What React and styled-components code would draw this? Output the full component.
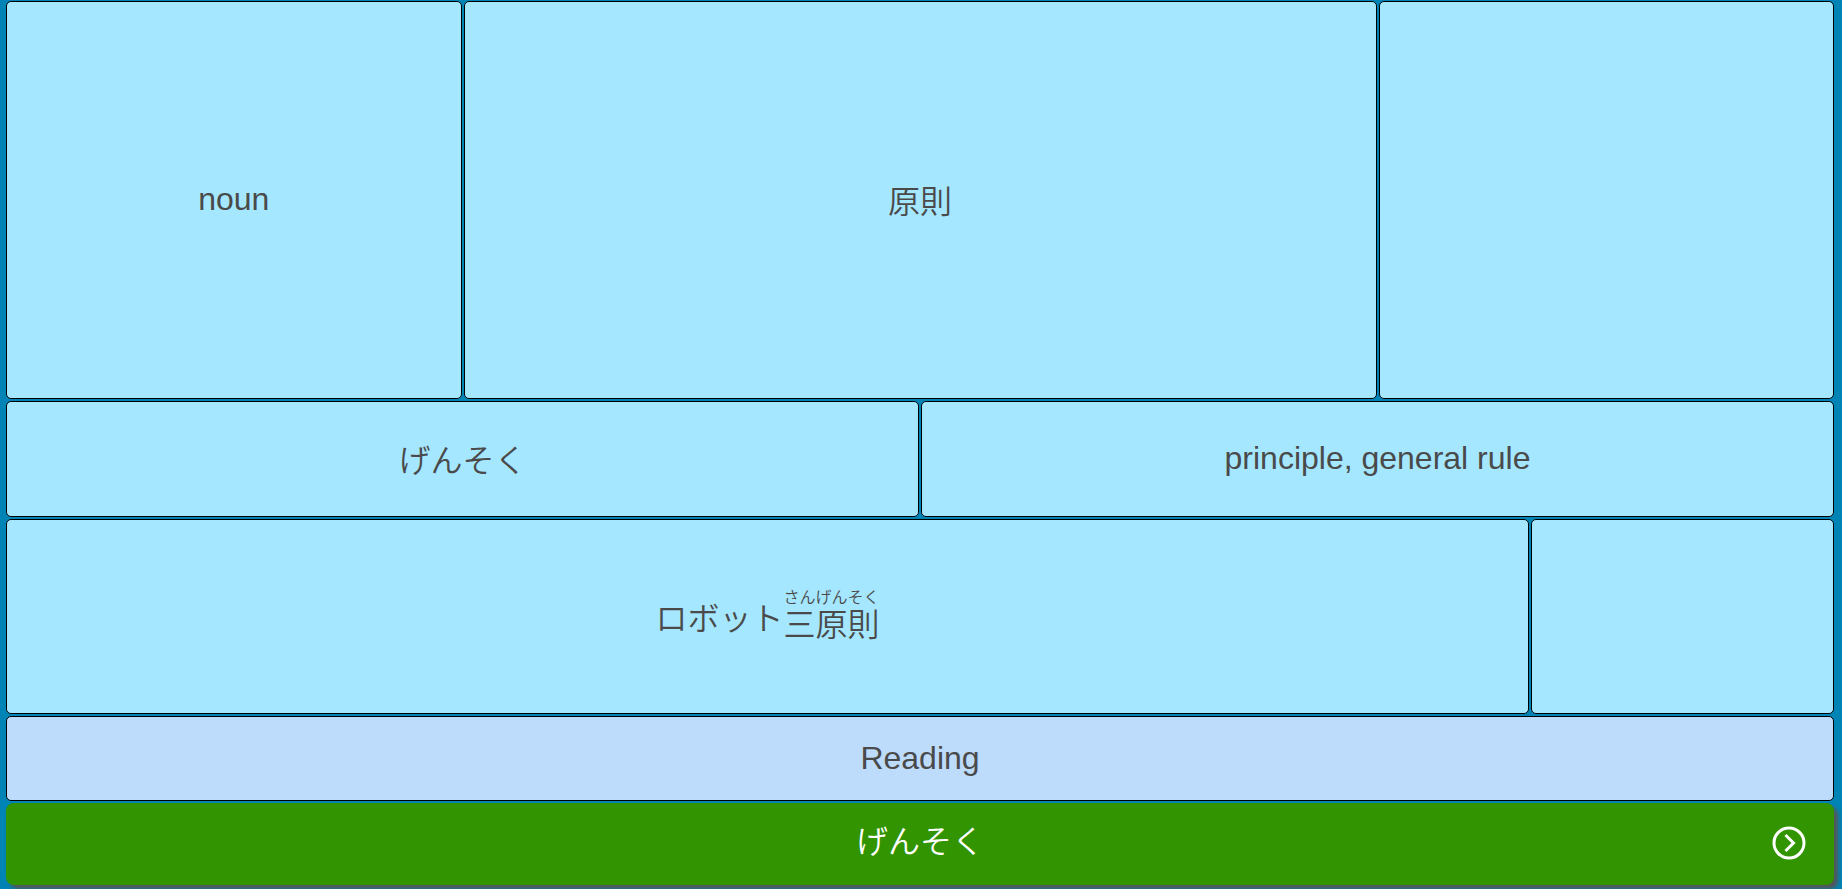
import React from "react";
import styled, { createGlobalStyle } from "styled-components";

const GlobalStyle = createGlobalStyle`
  *, *::before, *::after {
    box-sizing: border-box;
  }

  body {
    margin: 0;
    background: #0084b5;
    color: #4a4a4a;
    font-family: "Liberation Sans", "Noto Sans CJK JP", sans-serif;
    font-size: 32px;
    line-height: 48px;
  }
`;

const Page = styled.main`
  display: flex;
  flex-direction: column;
  gap: 2px;
  min-height: 100vh;
  padding: 1px 8px 4px 6px;
`;

const Row = styled.section`
  display: grid;
  grid-template-columns: repeat(${({ $columns }) => $columns}, minmax(0, 1fr));
  flex: ${({ $grow }) => ($grow ? "1 0 auto" : "0 0 auto")};
  gap: 2px;
  min-height: ${({ $height }) => $height};
`;

const Card = styled.div`
  display: flex;
  grid-column: span ${({ $span = 1 }) => $span};
  align-items: center;
  justify-content: center;
  padding: 0 16px 2px;
  border: 1px solid #000;
  border-radius: 5px;
  background: ${({ $tone }) => ($tone === "prompt" ? "#bddbfb" : "#a5e7ff")};
  text-align: center;
`;

const Japanese = styled.span`
  font-family: "Noto Sans CJK JP", sans-serif;
  font-weight: 350;
`;

const Sentence = styled(Japanese)`
  display: flex;
  align-items: center;
`;

const Annotated = styled.ruby`
  display: flex;
  flex-direction: column-reverse;
  line-height: 40px;
`;

const Furigana = styled.rt`
  display: block;
  font-size: 16px;
  line-height: 12px;
`;

const AnswerButton = styled.button`
  display: grid;
  grid-template-columns: 1fr auto 1fr;
  align-items: center;
  flex: 0 0 auto;
  min-height: 82px;
  padding: 0 28px 2px;
  border: 0;
  border-radius: 8px;
  background: #319400;
  box-shadow: 4px 4px 4px #555;
  color: #fff;
  font: inherit;
  cursor: pointer;
`;

const AnswerText = styled(Japanese)`
  grid-column: 2;
  padding-bottom: 8px;
`;

const NextIcon = styled.svg`
  justify-self: end;
  width: 34px;
  height: 34px;
  fill: none;
  stroke: currentColor;
  stroke-width: 3;
`;

export default function App() {
  return (
    <>
      <GlobalStyle />
      <Page>
        <Row $columns={4} $grow $height="160px">
          <Card>noun</Card>
          <Card $span={2}>
            <Japanese lang="ja">原則</Japanese>
          </Card>
          <Card />
        </Row>
        <Row $columns={2} $height="116px">
          <Card>
            <Japanese lang="ja">げんそく</Japanese>
          </Card>
          <Card>principle, general rule</Card>
        </Row>
        <Row $columns={6} $height="195px">
          <Card $span={5}>
            <Sentence lang="ja">
              ロボット
              <Annotated>
                三原則<Furigana>さんげんそく</Furigana>
              </Annotated>
            </Sentence>
          </Card>
          <Card />
        </Row>
        <Row $columns={1} $height="85px">
          <Card $tone="prompt">Reading</Card>
        </Row>
        <AnswerButton type="button">
          <AnswerText lang="ja">げんそく</AnswerText>
          <NextIcon viewBox="0 0 34 34" aria-hidden="true">
            <circle cx="17" cy="17" r="15" />
            <path d="M13.5 9l8 8-8 8" />
          </NextIcon>
        </AnswerButton>
      </Page>
    </>
  );
}
